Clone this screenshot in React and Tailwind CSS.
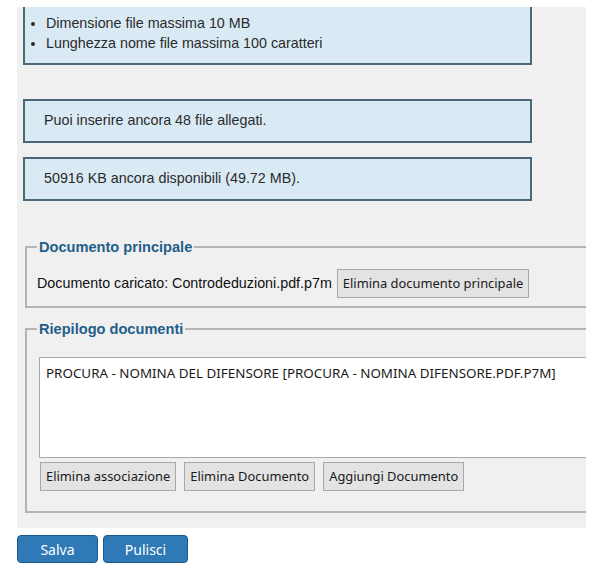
const infoBox =
  "ml-[6px] w-[509px] bg-[#daeaf5] border-[#4a6878] font-['Liberation_Sans',Arial,sans-serif] text-[14.3px] text-[#2b2b2b]";

const legend =
  "px-[2px] font-['Liberation_Sans',Arial,sans-serif] text-[14.6px] font-bold text-[#1f5e8a] leading-[18px]";

const greyButton =
  "h-[29px] px-[5px] border border-[#a8a8a8] bg-[#e3e3e3] font-['Noto_Sans','DejaVu_Sans',sans-serif] text-[12.9px] text-[#1a1a1a] leading-none";

const blueButton =
  "h-[28px] rounded-[4px] bg-[#2e79b6] border border-[#1d5a8c] text-white font-['Noto_Sans','DejaVu_Sans',sans-serif] text-[14px]";

export default function App() {
  return (
    <div className="w-[599px] h-[571px] bg-white overflow-hidden">
      <div className="pt-[7px] pl-[17px]">
        {/* grey form panel */}
        <div className="w-[569px] h-[521px] bg-[#f0f0f0] overflow-hidden flex flex-col">
          {/* upload limits */}
          <div className={`${infoBox} h-[58px] border-x-2 border-b-2 pl-[8px] pt-[6px]`}>
            <ul className="list-disc pl-[13px] leading-[20px]">
              <li>Dimensione file massima 10 MB</li>
              <li>Lunghezza nome file massima 100 caratteri</li>
            </ul>
          </div>

          <div className={`${infoBox} mt-[34px] h-[44px] border-2 pl-[19px] flex items-center`}>
            Puoi inserire ancora 48 file allegati.
          </div>

          <div className={`${infoBox} mt-[14px] h-[44px] border-2 pl-[19px] flex items-center`}>
            50916 KB ancora disponibili (49.72 MB).
          </div>

          {/* main document */}
          <fieldset className="ml-[8px] mt-[37px] w-[600px] h-[70px] border-2 border-[#b4b4b4] pl-[10px] pr-0 pb-0 pt-0">
            <legend className={legend}>Documento principale</legend>
            <div className="flex items-center gap-[5px] mt-[13px]">
              <span className="font-['Liberation_Sans',Arial,sans-serif] text-[14.3px] text-[#111]">
                Documento caricato: Controdeduzioni.pdf.p7m
              </span>
              <button className={greyButton}>Elimina documento principale</button>
            </div>
          </fieldset>

          {/* documents summary */}
          <fieldset className="ml-[8px] mt-[12px] w-[600px] h-[193px] border-2 border-[#b4b4b4] pl-[10px] pr-0 pb-0 pt-0">
            <legend className={legend}>Riepilogo documenti</legend>
            <div className="ml-[2px] mt-[19px] h-[101px] bg-white border border-[#a8a8a8] pl-[6px] pt-[6px]">
              <div className="font-['Noto_Sans','DejaVu_Sans',sans-serif] text-[13.4px] text-[#1a1a1a] leading-[18px] whitespace-nowrap">
                PROCURA - NOMINA DEL DIFENSORE [PROCURA - NOMINA DIFENSORE.PDF.P7M]
              </div>
            </div>
            <div className="flex gap-[8px] mt-[4px] ml-[3px]">
              <button className={greyButton}>Elimina associazione</button>
              <button className={greyButton}>Elimina Documento</button>
              <button className={greyButton}>Aggiungi Documento</button>
            </div>
          </fieldset>
        </div>

        {/* form actions */}
        <div className="flex gap-[5px] mt-[7px]">
          <button className={`${blueButton} w-[81px]`}>Salva</button>
          <button className={`${blueButton} w-[85px]`}>Pulisci</button>
        </div>
      </div>
    </div>
  );
}
